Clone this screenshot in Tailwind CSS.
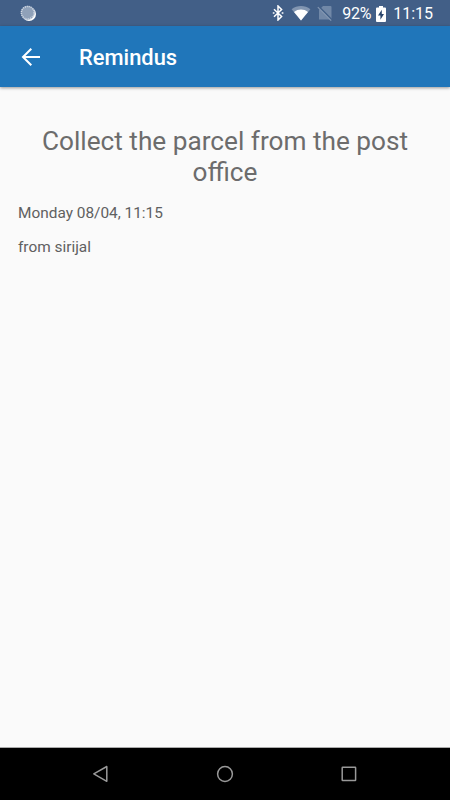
<!DOCTYPE html>
<html lang="en">
<head>
    <meta charset="UTF-8">
    <meta name="viewport" content="width=device-width, initial-scale=1.0">
    <title>Remindus</title>
    <script src="https://cdn.jsdelivr.net/npm/@tailwindcss/browser@4"></script>
</head>
<body class="bg-[#fafafa] font-['Roboto',sans-serif]">
    <div class="w-[450px] h-[800px] flex flex-col overflow-hidden">
        <!-- Status Bar -->
        <div class="h-[26px] shrink-0 bg-[#425f87] flex items-center justify-between pl-5 pr-[17px] text-white">
            <svg class="w-4 h-4" viewBox="0 0 16 16" fill="none">
                <circle cx="9" cy="9" r="7" fill="#fff"/>
                <circle cx="7.7" cy="7.7" r="7" fill="#8fa1b9"/>
                <circle cx="7.7" cy="7.7" r="6.3" stroke="#d5dce6" stroke-width="1.5" stroke-dasharray="1 1"/>
            </svg>
            <div class="flex items-center">
                <!-- Bluetooth -->
                <svg class="w-3 h-4" viewBox="0 0 12 16" fill="none" stroke="#fff" stroke-width="1.5">
                    <path d="M2 4.2l7.6 7.3L6 15V1l3.6 3.5L2 11.8"/>
                    <path d="M.8 7.2h1.7v1.6H.8zM9.700 7.200h1.700v1.600H9.700z" fill="#fff" stroke="none"/>
                </svg>
                <!-- Wifi -->
                <svg class="w-5 h-4 ml-[7px]" viewBox="0 0 20 16">
                    <path d="M.6 4.200C6-.1 14-.1 19.400 4.200L10 15.400z" fill="#8296b1"/>
                    <path d="M3 7C7 3.700 13 3.700 17 7l-7 8.400z" fill="#fff"/>
                </svg>
                <!-- No SIM -->
                <svg class="w-4 h-4 ml-[6px]" viewBox="0 0 16 16">
                    <path d="M6 1h7.500q1 0 1 1v12.500H2V5z" fill="#7188a7"/>
                    <path d="M1.600 1.400l13.600 13.600" stroke="#425f87" stroke-width="1.500"/>
                    <path d="M.8 2.200l13.400 13.400" stroke="#8296b1" stroke-width="1.200"/>
                </svg>
                <span class="ml-[9px] text-[16px] leading-none w-[29px] whitespace-nowrap tracking-[-0.2px] mt-[2px]">92%</span>
                <!-- Battery charging -->
                <svg class="w-[10px] h-4 ml-[5px] mt-px" viewBox="0 0 10 16">
                    <path d="M3 0h4v1.600h2q1 0 1 1V15q0 1-1 1H1q-1 0-1-1V2.600q0-1 1-1h2z" fill="#fff"/>
                    <path d="M5.800 3.800L2 9.600h2.400v4.200L8 8H5.800z" fill="#28446c"/>
                </svg>
                <span class="ml-[7px] text-[16px] leading-none mt-[2px]">11:15</span>
            </div>
        </div>

        <!-- App Bar -->
        <header class="h-[61px] shrink-0 bg-[#2076ba] flex items-center shadow-[0_1px_3px_rgba(0,0,0,0.4)]">
            <svg class="w-5 h-5 ml-[21px]" viewBox="0 0 20 20" fill="none" stroke="#fff" stroke-width="2">
                <path d="M19 10H2.500M10.300 1.700L2 10l8.300 8.300"/>
            </svg>
            <h1 class="ml-[38px] text-[21.900px] font-medium leading-none text-white mt-[3px]">Remindus</h1>
        </header>

        <!-- Reminder -->
        <main class="grow px-[18px] pt-[39px] text-[#606060]">
            <h2 class="text-[26.2px] leading-[31px] text-center text-[#6c6c6c]">Collect the parcel from the post office</h2>
            <p class="mt-[15px] text-[15.4px] leading-5">Monday 08/04, 11:15</p>
            <p class="mt-[14px] text-[15.4px] leading-5">from sirijal</p>
        </main>

        <!-- Navigation Bar -->
        <nav class="h-[53px] shrink-0 bg-black border-t border-[#aaa] flex items-center justify-between pl-[92px] pr-[93px]">
            <svg class="w-4 h-[18px]" viewBox="0 0 16 18" fill="none" stroke="#999" stroke-width="1.500">
                <path d="M14.800 1.500v14.800L1.800 8.900z" stroke-linejoin="round"/>
            </svg>
            <svg class="w-[18px] h-[18px]" viewBox="0 0 18 18" fill="none" stroke="#999" stroke-width="1.500">
                <circle cx="9" cy="9" r="7.400"/>
            </svg>
            <svg class="w-4 h-4" viewBox="0 0 16 16" fill="none" stroke="#999" stroke-width="1.500">
                <rect x="1.200" y="1.200" width="13.400" height="13.400" rx=".5"/>
            </svg>
        </nav>
    </div>
</body>
</html>
